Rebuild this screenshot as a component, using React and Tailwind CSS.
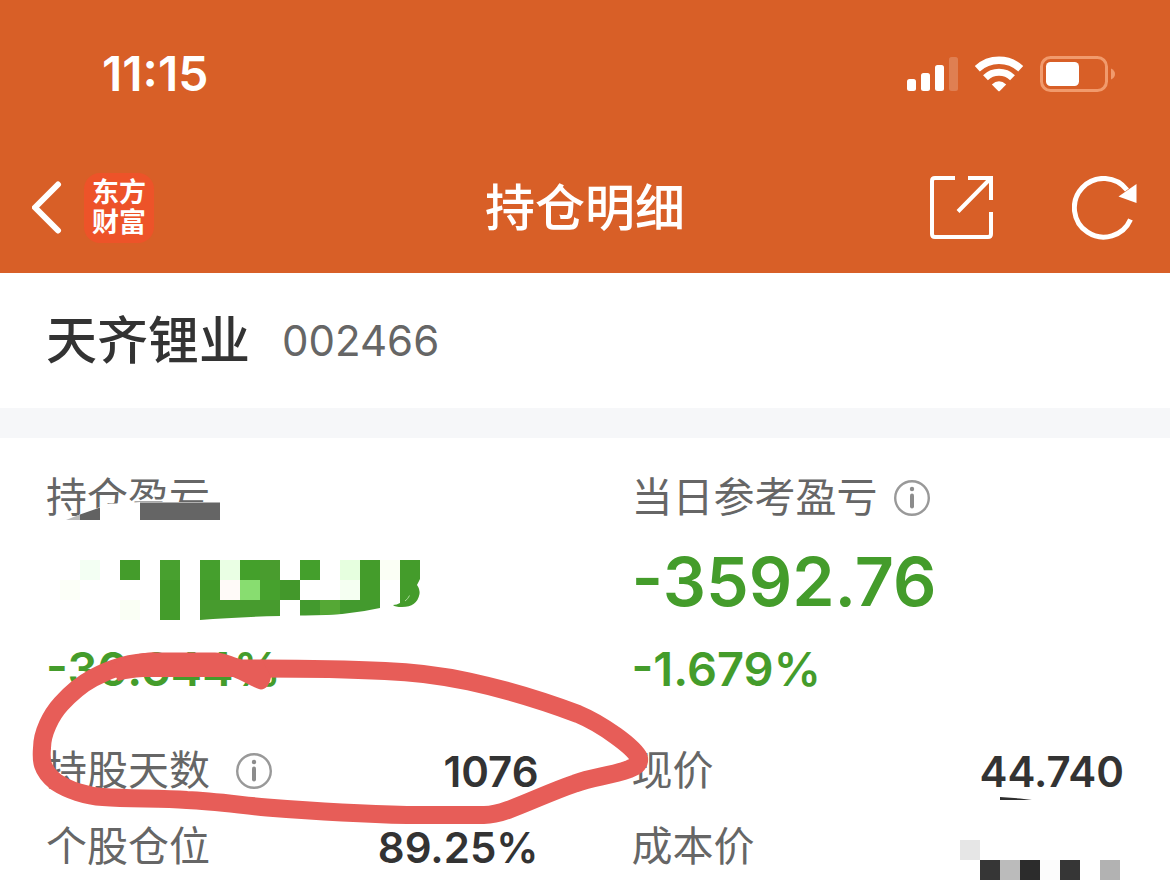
const GREEN = "#449c2b";

// Mosaic cells over the profit figure, 20px each: [x, y, colour]
const PROFIT_CELLS = [
  [80, 560, "#f3fff3"],
  [120, 560, GREEN],
  [160, 560, "#48a02f"],
  [200, 560, "#459f2d"],
  [220, 560, "#eaffe4"],
  [240, 560, "#44a02b"],
  [260, 560, "#499c2e"],
  [300, 560, "#449f2c"],
  [340, 560, "#e6ffdf"],
  [360, 560, "#449c2b"],
  [380, 560, "#fbfff5"],
  [60, 580, "#fcfff8"],
  [160, 580, "#439b2a"],
  [200, 580, "#439b2a"],
  [220, 580, "#fffaf8"],
  [240, 580, "#88dd70"],
  [260, 580, "#46a12d"],
  [280, 580, "#43982b"],
  [340, 580, "#f5fff2"],
  [360, 580, "#449c2b"],
  [120, 600, "#fafff5"],
  [160, 600, "#449c2b"],
];

const COST_CELLS = [
  [960, 840, "#e6e6e6"],
  [980, 860, "#363636"],
  [1000, 860, "#bbbbbb"],
  [1020, 860, "#2c2c2c"],
  [1040, 860, "#fcfcfc"],
  [1060, 860, "#363636"],
  [1100, 860, "#b2b2b2"],
];

function Cells({ cells }) {
  return cells.map(([x, y, fill]) => (
    <rect key={`${x}-${y}`} x={x} y={y} width="20" height="20" fill={fill} />
  ));
}

function SignalIcon() {
  return (
    <svg width="51" height="36" viewBox="0 0 51 36" fill="#fff" aria-hidden="true">
      <rect x="0" y="23" width="9" height="12" rx="2.5" />
      <rect x="14" y="17" width="9" height="18" rx="2.5" />
      <rect x="28" y="9" width="9" height="26" rx="2.5" />
      <rect x="42" y="1" width="9" height="34" rx="2.5" opacity="0.2" />
    </svg>
  );
}

function WifiIcon() {
  return (
    <svg width="50" height="36" viewBox="0 0 50 36" fill="none" aria-hidden="true">
      <path d="M3.300 12.700A32 32 0 0 1 46.700 12.700" stroke="#fff" strokeWidth="7.400" />
      <path d="M11.500 21.800A19.500 19.500 0 0 1 38.500 21.800" stroke="#fff" strokeWidth="7" />
      <path d="M17.800 28.400Q25 22 32.200 28.400L26 34.800Q25 35.800 24 34.800Z" fill="#fff" />
    </svg>
  );
}

function BatteryIcon() {
  return (
    <svg width="75" height="36" viewBox="0 0 75 36" aria-hidden="true">
      <rect x="1.5" y="1.5" width="65" height="33" rx="9" fill="none" stroke="#f19a6c" strokeWidth="3" />
      <rect x="6" y="6" width="33" height="24" rx="4.500" fill="#fff" />
      <path d="M71 12.500Q75 14.500 75 18T71 23.500Z" fill="#f19a6c" />
    </svg>
  );
}

function InfoIcon() {
  return (
    <svg width="36" height="36" viewBox="0 0 36 36" fill="none" aria-hidden="true">
      <circle cx="18" cy="18" r="16.800" stroke="#999" strokeWidth="2.400" />
      <circle cx="18" cy="9" r="2.200" fill="#8c8c8c" />
      <path d="M18 15.500V26.500" stroke="#8c8c8c" strokeWidth="4" strokeLinecap="round" />
    </svg>
  );
}

function Header() {
  return (
    <header className="bg-[#d85f27] text-white">
      <div className="flex h-[143px] items-center justify-between pt-1 pr-[55px] pl-[102px]">
        <span className="text-[48px] leading-none font-semibold">11:15</span>
        <div className="flex items-center gap-4">
          <SignalIcon />
          <WifiIcon />
          <BatteryIcon />
        </div>
      </div>

      <nav className="grid h-[130px] grid-cols-[1fr_auto_1fr] items-center px-8">
        <div className="flex items-center gap-5">
          <button type="button" aria-label="返回">
            <svg width="32" height="54" viewBox="0 0 32 54" fill="none" stroke="#fff" strokeWidth="6" strokeLinecap="round" strokeLinejoin="round">
              <path d="M26 3.500L3 26.500L26 49.500" />
            </svg>
          </button>
          <a href="#" className="flex h-[70px] w-[70px] flex-col items-center justify-center rounded-2xl bg-[#ed5329] text-[27px] leading-[30px] font-bold">
            <span>东方</span>
            <span>财富</span>
          </a>
        </div>
        <h1 className="text-[50px] leading-none font-medium">持仓明细</h1>
        <div className="flex items-center justify-end gap-[78px]">
          <button type="button" aria-label="分享">
            <svg width="64" height="64" viewBox="0 0 64 64" fill="none" stroke="#fff" strokeWidth="4">
              <path d="M25 2H5Q2 2 2 5V58Q2 61 5 61H58Q61 61 61 58V36" />
              <path d="M38 2H61V24M60 3L28 35.500" />
            </svg>
          </button>
          <button type="button" aria-label="刷新">
            <svg width="66" height="64" viewBox="0 0 66 64" fill="none">
              <path d="M58.500 43.500A29.300 29.300 0 1 1 55 14" stroke="#fff" strokeWidth="5" />
              <path d="M64.500 8V27L46.500 20.500Z" fill="#fff" />
            </svg>
          </button>
        </div>
      </nav>
    </header>
  );
}

function Row({ label, info, children }) {
  return (
    <div className="flex h-[76px] items-center justify-between">
      <dt className="flex items-center gap-[26px] text-[41px] text-[#666]">
        {label}
        {info ? <InfoIcon /> : null}
      </dt>
      <dd className="text-[42px] font-semibold text-[#333]">{children}</dd>
    </div>
  );
}

// Blurred-out profit amount
function HiddenProfit() {
  return (
    <svg width="380" height="106" viewBox="46 528 380 106" role="img" aria-label="已隐藏">
      <Cells cells={PROFIT_CELLS} />
      <path d="M200 600H280V616Q235 617 200 620Z" fill="#479b2e" />
      <path d="M300 600H380V608Q345 616 300 615.500Z" fill="#439a2e" />
      <path d="M320 600H340V614L320 615Z" fill="#55a835" />
      <path d="M400 560H420V579Q418 583 417 585Q420 589 419.500 594Q417 607 402 607Q395 607 393 605Q397 605 400 603Z" fill={GREEN} />
      <path d="M405 601Q408 599 409.500 595.500" stroke="#c4e8b8" strokeWidth="0.800" fill="none" />
    </svg>
  );
}

function HiddenCost() {
  return (
    <svg width="164" height="76" viewBox="960 809 164 76" className="overflow-visible" role="img" aria-label="已隐藏">
      <path d="M1000 797L1020 798.500L1032 800H1000Z" fill="#2f2f2f" />
      <Cells cells={COST_CELLS} />
    </svg>
  );
}

// Brush marks drawn over the label and the holding-days row
function Markup() {
  return (
    <svg width="660" height="447" viewBox="0 438 660 447" className="pointer-events-none absolute top-0 left-0" aria-hidden="true">
      <path d="M66 520L100 507L107 504L140 502H220V524H66Z" fill="#fff" />
      <path d="M66 520L80 514.500V520Z" fill="#bbb" />
      <path d="M80 514.500L100 507.500V520H80Z" fill="#626262" />
      <path d="M140 502.500H220V520H140Z" fill="#656565" />
      <path
        fill="none"
        stroke="#e75d58"
        strokeWidth="18"
        strokeLinecap="round"
        strokeLinejoin="round"
        d="M262 668.500C310 668.500 355 669.500 385 671C415 672 443 676 469 681.500C508 690 546 702 578 714C602 724 634 747 639 758C640 765 634 767 628 769.500C610 776 592 777 575 783.500C550 792 530 802 508 810C500 813 494 815 484 815H407C360 814 312 811 267 807.500C240 805 213 801 187 800C160 798 130 799 103 797C86 796 68 790 56 782C41 770 41 760 42 748C42 733 51 715 61 704C71 693 80 685 93 678C113 667 133 662 153 661.500"
      />
      <path
        fill="#e75d58"
        d="M110 665C128 656 140 652.500 153 652.500H215C226 653 232 657 242 659.500H262L271 677C270 684 266 689.500 261 689.500C257 689.500 243 681 233 677H147C137 677 129 678 118 681Z"
      />
    </svg>
  );
}

export default function App() {
  return (
    <div className="min-h-screen bg-white font-[Inter,'Noto_Sans_CJK_SC',sans-serif]">
      <Header />

      <section className="flex h-[135px] items-center gap-8 px-[46px]">
        <h2 className="text-[51px] leading-none font-medium text-[#333]">天齐锂业</h2>
        <span className="text-[42px] leading-none text-[#666]">002466</span>
      </section>

      <div className="h-[30px] bg-[#f6f7f9]" />

      <main className="relative grid grid-cols-2 gap-x-[93px] px-[46px] pt-[30px]">
        <section>
          <h3 className="flex h-[60px] items-center text-[41px] text-[#666]">持仓盈亏</h3>
          <HiddenProfit />
          <p className="flex h-[70px] items-center text-[47px] font-semibold text-[#449c2b]">-30.644%</p>
          <dl className="mt-[29px]">
            <Row label="持股天数" info>1076</Row>
            <Row label="个股仓位">89.25%</Row>
          </dl>
        </section>

        <section>
          <h3 className="flex h-[60px] items-center gap-4 text-[41px] text-[#666]">
            当日参考盈亏
            <InfoIcon />
          </h3>
          <p className="flex h-[106px] items-center text-[68px] font-semibold text-[#449c2b]">-3592.76</p>
          <p className="flex h-[70px] items-center text-[47px] font-semibold text-[#449c2b]">-1.679%</p>
          <dl className="mt-[29px]">
            <Row label="现价">44.740</Row>
            <Row label="成本价"><HiddenCost /></Row>
          </dl>
        </section>

        <Markup />
      </main>
    </div>
  );
}
